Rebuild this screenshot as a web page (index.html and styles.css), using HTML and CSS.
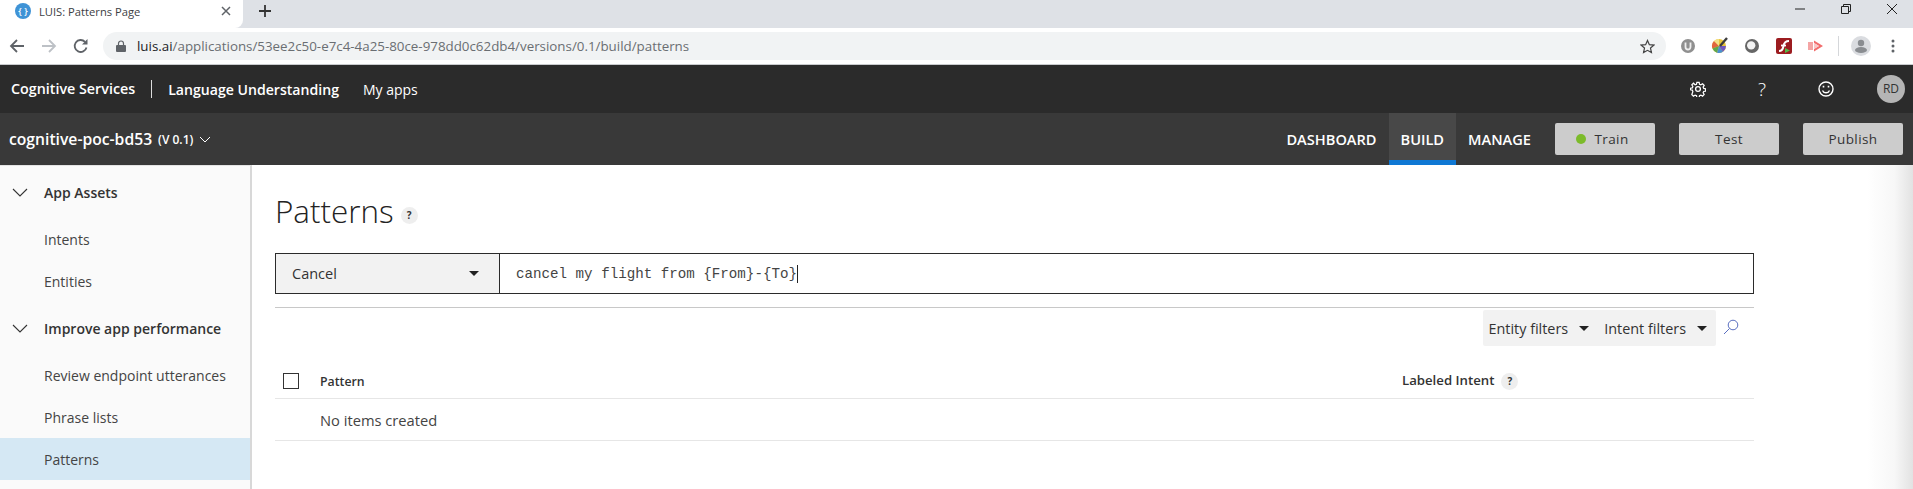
FILE: index.html
```html
<!DOCTYPE html>
<html lang="en">
  <head>
    <meta charset="UTF-8" />
    <title>LUIS: Patterns Page</title>
    <link rel="stylesheet" href="styles.css">
  </head>
  <body>
    <div class="tab-strip">
      <div class="tab">
        <span class="favicon">{ }</span>
        <span class="tab-title">LUIS: Patterns Page</span>
        <svg class="tab-close" width="10" height="10" viewBox="0 0 10 10"><path d="M1 1l8 8M9 1l-8 8" stroke="#5f6368" stroke-width="1.5"/></svg>
      </div>
      <svg class="new-tab" width="14" height="14" viewBox="0 0 14 14"><path d="M7 1v12M1 7h12" stroke="#333" stroke-width="1.8"/></svg>
      <div class="window-controls">
        <svg width="12" height="12" viewBox="0 0 12 12"><path d="M1 6h10" stroke="#222"/></svg>
        <svg width="12" height="12" viewBox="0 0 12 12"><path d="M1.5 3.5h7v7h-7zM3.5 3.5v-2h7v7h-2" fill="none" stroke="#222"/></svg>
        <svg width="12" height="12" viewBox="0 0 12 12"><path d="M1 1l10 10M11 1l-10 10" stroke="#222"/></svg>
      </div>
    </div>

    <div class="toolbar">
      <div class="nav-buttons">
        <svg width="16" height="16" viewBox="0 0 16 16"><path d="M15 8H2M8 2L2 8l6 6" fill="none" stroke="#5f6368" stroke-width="1.8"/></svg>
        <svg width="16" height="16" viewBox="0 0 16 16"><path d="M1 8h13M8 2l6 6-6 6" fill="none" stroke="#bdc1c6" stroke-width="1.8"/></svg>
        <svg width="16" height="16" viewBox="0 0 16 16"><path d="M13.5 9.5A6 6 0 1 1 12 3.800" fill="none" stroke="#5f6368" stroke-width="1.8"/><path d="M14.5 1v5.500H9z" fill="#5f6368"/></svg>
      </div>
      <div class="address-bar">
        <svg class="lock" width="10" height="12" viewBox="0 0 10 12"><path d="M2.5 5V3.500a2.500 2.500 0 0 1 5 0V5" fill="none" stroke="#5f6368" stroke-width="1.2"/><rect y="5" width="10" height="7" rx="1" fill="#5f6368"/></svg>
        <span class="url"><span class="url-host">luis.ai</span>/applications/53ee2c50-e7c4-4a25-80ce-978dd0c62db4/versions/0.1/build/patterns</span>
        <svg class="star" width="15" height="15" viewBox="0 0 16 16"><path d="M8 1.5l2 4.500 4.800.5-3.600 3.200 1 4.800L8 12.100l-4.200 2.400 1-4.800L1.200 6.500 6 6z" fill="none" stroke="#444" stroke-width="1.3"/></svg>
      </div>
      <div class="extensions">
        <svg width="16" height="16" viewBox="0 0 16 16"><circle cx="8" cy="8" r="7" fill="#8f8f8f"/><path d="M5.5 4.500V9a2.500 2.500 0 0 0 5 0V4.500" fill="none" stroke="#eee" stroke-width="1.8"/></svg>
        <svg class="ext-colors" width="18" height="18" viewBox="0 0 18 18"><circle cx="8" cy="10" r="7" fill="#e9c53a"/><path d="M8 10L3 5a7 7 0 0 0-1.500 7.500z" fill="#e0653f"/><path d="M8 10l-6.500 2.500A7 7 0 0 0 6 16.700z" fill="#5da84e"/><path d="M8 10l-2 6.700a7 7 0 0 0 6 -1z" fill="#4a90d0"/><path d="M8 10l4 5.700a7 7 0 0 0 3-5.700z" fill="#6f58c2"/><path d="M8 10L3 5a7 7 0 0 1 5-2z" fill="#f3e08a"/><path d="M9 10l7-8" stroke="#3d3d3d" stroke-width="2.4"/></svg>
        <svg width="16" height="16" viewBox="0 0 16 16"><circle cx="8" cy="8" r="7" fill="#666"/><circle cx="7.200" cy="7.400" r="4.200" fill="#f2f2f2"/></svg>
        <svg width="16" height="16" viewBox="0 0 16 16"><rect width="16" height="16" rx="2" fill="#9c1c20"/><path d="M13 3c-4 0-5 2-5.500 5S6 13 3 13" fill="none" stroke="#fff" stroke-width="2"/><path d="M5 7.5h5" stroke="#fff" stroke-width="1.8"/><path d="M9 10l5 2.500-5 2.500z" fill="#54b948"/></svg>
        <svg width="16" height="16" viewBox="0 0 16 16"><path d="M0 4h5v8H0z" fill="#f4a5a5"/><path d="M6 2.500l9 5.500-9 5.500V11l5-3-5-3z" fill="#f26d6d"/><path d="M6 5l5 3-5 3z" fill="#f9c7c7"/></svg>
      </div>
      <span class="toolbar-sep"></span>
      <svg class="profile" width="20" height="20" viewBox="0 0 20 20"><circle cx="10" cy="10" r="10" fill="#dadce0"/><circle cx="10" cy="7" r="3.200" fill="#8a8d91"/><ellipse cx="10" cy="14" rx="6" ry="3" fill="#8a8d91"/></svg>
      <svg class="menu-dots" width="4" height="14" viewBox="0 0 4 14"><circle cx="2" cy="2" r="1.5" fill="#5f6368"/><circle cx="2" cy="7" r="1.5" fill="#5f6368"/><circle cx="2" cy="12" r="1.5" fill="#5f6368"/></svg>
    </div>

    <div class="top-nav">
      <a class="brand">Cognitive Services</a>
      <a class="product">Language Understanding</a>
      <a class="my-apps">My apps</a>
      <div class="top-icons">
        <svg width="16" height="16" viewBox="0 0 16 16" fill="none" stroke="#fff" stroke-width="1.3"><circle cx="8" cy="8" r="2.400"/><path d="M6.800 1h2.400l.4 2 1.400.6 1.800-1.100 1.700 1.700-1.100 1.800.6 1.400 2 .4v2.400l-2 .4-.6 1.400 1.100 1.800-1.700 1.700-1.800-1.100-1.400.6-.4 2H6.800l-.4-2-1.400-.6-1.800 1.100-1.700-1.700L2.600 10.600 2 9.200 0 8.800V7.200l2-.4.600-1.400-1.100-1.800 1.700-1.700L5 3.600l1.400-.6z" transform="translate(.4 .4) scale(.95)"/></svg>
        <span class="help-glyph">?</span>
        <svg width="16" height="16" viewBox="0 0 16 16" fill="none" stroke="#fff" stroke-width="1.4"><circle cx="8" cy="8" r="7"/><path d="M4.500 9.500a3.800 3.800 0 0 0 7 0"/><path d="M5.500 4.800v1.700M10.500 4.800v1.700" stroke-width="1.6"/></svg>
        <span class="avatar">RD</span>
      </div>
    </div>

    <div class="sub-nav">
      <span class="app-name">cognitive-poc-bd53</span>
      <span class="app-version">(V 0.1)</span>
      <svg class="app-chevron" width="12" height="7" viewBox="0 0 12 7"><path d="M1 1l5 5 5-5" fill="none" stroke="#fff"/></svg>
      <nav class="section-tabs">
        <a>DASHBOARD</a>
        <a class="active">BUILD</a>
        <a>MANAGE</a>
      </nav>
      <div class="actions">
        <button><span class="status-dot"></span>Train</button>
        <button>Test</button>
        <button>Publish</button>
      </div>
    </div>

    <div class="content">
      <aside class="sidebar">
        <div class="side-head"><svg width="16" height="9" viewBox="0 0 16 9"><path d="M1 1l7 7 7-7" fill="none" stroke="#333" stroke-width="1.1"/></svg>App Assets</div>
        <a class="side-link">Intents</a>
        <a class="side-link">Entities</a>
        <div class="side-head"><svg width="16" height="9" viewBox="0 0 16 9"><path d="M1 1l7 7 7-7" fill="none" stroke="#333" stroke-width="1.1"/></svg>Improve app performance</div>
        <a class="side-link">Review endpoint utterances</a>
        <a class="side-link">Phrase lists</a>
        <a class="side-link selected">Patterns</a>
      </aside>

      <main class="main">
        <div class="page-title">
          <h1>Patterns</h1>
          <span class="help-dot">?</span>
        </div>

        <div class="pattern-form">
          <div class="intent-select">
            <span>Cancel</span>
            <span class="caret"></span>
          </div>
          <div class="pattern-input">cancel my flight from {From}-{To}<span class="text-cursor"></span></div>
        </div>

        <div class="filter-row">
          <div class="filters">
            <div class="filter">Entity filters<span class="caret"></span></div>
            <div class="filter">Intent filters<span class="caret"></span></div>
          </div>
          <svg class="search-icon" width="16" height="16" viewBox="0 0 16 16"><circle cx="10" cy="6" r="4.800" fill="none" stroke="#5a6fc0"/><path d="M6.500 9.500L1 15" stroke="#5a6fc0"/></svg>
        </div>

        <div class="table-head">
          <span class="checkbox"></span>
          <span class="col-pattern">Pattern</span>
          <span class="col-intent">Labeled Intent<span class="help-dot small">?</span></span>
        </div>
        <div class="table-empty">No items created</div>
      </main>

      <div class="edge-shade"></div>
    </div>
  </body>
</html>
```

FILE: styles.css
```css
* {
  margin: 0;
  padding: 0;
  box-sizing: border-box;
}
html,
body {
  width: 100%;
  height: 100%;
  overflow: hidden;
  background: #fff;
  font-family: "Open Sans", sans-serif;
  color: #333;
}
svg {
  display: block;
  flex: none;
}

/* browser chrome */
.tab-strip {
  display: flex;
  align-items: center;
  height: 28px;
  background: #dee1e6;
}
.tab {
  display: flex;
  align-items: center;
  width: 243px;
  height: 28px;
  padding: 0 0 6px 15px;
  background: #fff;
  border-radius: 0 0 8px 0;
}
.favicon {
  width: 16px;
  height: 16px;
  border-radius: 50%;
  background: #3f93d6;
  color: #fff;
  font-size: 9px;
  font-weight: 600;
  line-height: 15px;
  text-align: center;
}
.tab-title {
  margin-left: 8px;
  font-size: 11.2px;
  color: #3c4043;
  width: 183px;
  white-space: nowrap;
}
.tab-close {
  margin-left: -1px;
}
.new-tab {
  margin: -6px 0 0 15px;
}
.window-controls {
  display: flex;
  gap: 34px;
  margin-left: auto;
  margin-right: 15px;
  margin-top: -10px;
}
.toolbar {
  display: flex;
  align-items: center;
  height: 37px;
  background: #fff;
  border-bottom: 1px solid #c9cbce;
}
.nav-buttons {
  display: flex;
  gap: 16px;
  margin-left: 9px;
}
.address-bar {
  display: flex;
  align-items: center;
  width: 1563px;
  height: 28px;
  margin-left: 14px;
  background: #f1f3f4;
  border-radius: 14px;
  padding: 0 11px 0 13px;
}
.lock {
  margin-right: 11px;
}
.url {
  font-size: 13.35px;
  color: #6a6e72;
  white-space: nowrap;
}
.url-host {
  color: #202124;
}
.star {
  margin-left: auto;
}
.extensions {
  display: flex;
  align-items: center;
  gap: 16px;
  margin-left: 14px;
}
.ext-colors {
  margin: -2px -1px 0;
}
.toolbar-sep {
  width: 1px;
  height: 20px;
  background: #d5d7da;
  margin-left: 14px;
}
.profile {
  margin-left: 12px;
}
.menu-dots {
  margin-left: 20px;
}

/* app header */
.top-nav {
  display: flex;
  align-items: center;
  height: 48px;
  background: #2b2b2b;
  color: #fff;
  font-size: 14px;
}
.brand {
  margin-left: 11px;
  font-size: 14.3px;
  font-weight: 600;
  padding-right: 16px;
  border-right: 1px solid #ddd;
  line-height: 18px;
}
.product {
  margin-left: 16px;
  font-size: 14.1px;
  font-weight: 600;
}
.my-apps {
  margin-left: 24px;
  font-size: 14px;
}
.top-icons {
  display: flex;
  align-items: center;
  margin-left: auto;
  margin-right: 8px;
  gap: 51px;
}
.help-glyph {
  font-size: 19px;
  font-weight: 300;
  width: 10px;
  text-align: center;
}
.avatar {
  width: 28px;
  height: 28px;
  margin-left: -8px;
  border-radius: 50%;
  background: #b5b5b5;
  color: #333;
  font-size: 12px;
  line-height: 28px;
  text-align: center;
}
.sub-nav {
  display: flex;
  align-items: center;
  height: 52px;
  background: #393939;
  color: #fff;
}
.app-name {
  margin-left: 9px;
  font-size: 15.7px;
  font-weight: 600;
}
.app-version {
  margin-left: 6px;
  font-size: 12px;
  font-weight: 600;
}
.app-chevron {
  margin-left: 6px;
}
.section-tabs {
  display: flex;
  align-items: stretch;
  align-self: stretch;
  margin-left: auto;
  font-size: 14.6px;
  font-weight: 600;
}
.section-tabs a {
  display: flex;
  align-items: center;
  padding: 0 12px 1px;
}
.section-tabs .active {
  background: #484848;
  border-bottom: 5px solid #0f78d4;
  padding: 5px 12px 0;
}
.actions {
  display: flex;
  gap: 24px;
  margin-left: 12px;
  margin-right: 10px;
}
.actions button {
  display: flex;
  align-items: center;
  justify-content: center;
  width: 100px;
  height: 32px;
  background: #cccccc;
  border: none;
  border-radius: 2px;
  font-family: inherit;
  font-size: 13.5px;
  letter-spacing: 0.4px;
  color: #333;
}
.status-dot {
  width: 10px;
  height: 10px;
  border-radius: 50%;
  background: #7cbb2a;
  margin: 0 8px 0 -5px;
}

/* page */
.content {
  display: flex;
  height: 324px;
}
.sidebar {
  width: 252px;
  flex: none;
  background: #fafafa;
  border-right: 2px solid #d8d8d8;
  border-top: 1px solid #e4e4e4;
}
.side-head,
.side-link {
  display: flex;
  align-items: center;
  font-size: 14px;
  white-space: nowrap;
}
.side-head {
  font-weight: 600;
  height: 52px;
  padding-left: 12px;
}
.side-head svg {
  margin-right: 16px;
}
.side-link {
  height: 42px;
  padding-left: 44px;
  color: #444;
}
.side-link.selected {
  background: #d5e8f4;
}
.main {
  flex: 1;
  padding: 0 113px 0 23px;
  min-width: 0;
}
.page-title {
  display: flex;
  align-items: center;
  height: 88px;
  padding-top: 2px;
}
.page-title h1 {
  font-size: 31.4px;
  font-weight: 300;
  color: #222;
}
.help-dot {
  width: 17px;
  height: 17px;
  margin: 10px 0 0 7px;
  border-radius: 50%;
  background: #eee;
  font-size: 10px;
  font-weight: 700;
  line-height: 17px;
  text-align: center;
}
.help-dot.small {
  display: inline-block;
  margin: 2px 0 0 7px;
}
.pattern-form {
  display: flex;
  height: 41px;
  border: 1px solid #2b2b2b;
}
.intent-select {
  display: flex;
  align-items: center;
  justify-content: space-between;
  width: 224px;
  padding: 0 20px 0 16px;
  background: #f2f2f2;
  border-right: 1px solid #2b2b2b;
  font-size: 14.5px;
}
.caret {
  width: 0;
  height: 0;
  border-left: 5px solid transparent;
  border-right: 5px solid transparent;
  border-top: 5px solid #222;
}
.pattern-input {
  display: flex;
  align-items: center;
  flex: 1;
  padding-left: 16px;
  font-family: "Liberation Mono", monospace;
  font-size: 14.2px;
  color: #444;
  white-space: pre;
}
.text-cursor {
  width: 1px;
  height: 18px;
  background: #222;
}
.filter-row {
  display: flex;
  align-items: center;
  justify-content: flex-end;
  height: 40px;
  margin-top: 13px;
  border-top: 1px solid #c8c8c8;
  padding: 2px 15px 1px 0;
}
.filters {
  display: flex;
  align-items: center;
  height: 36px;
  background: #f2f2f2;
  border-radius: 2px;
  font-size: 14.4px;
  padding: 0 9px 0 5px;
  gap: 15px;
}
.filter {
  display: flex;
  align-items: center;
  gap: 11px;
}
.search-icon {
  margin-left: 7px;
  margin-top: -2px;
}
.table-head {
  display: flex;
  align-items: center;
  height: 52px;
  border-bottom: 1px solid #e6e6e6;
  font-size: 12.3px;
  font-weight: 600;
  padding: 17px 0 0 8px;
}
.checkbox {
  width: 16px;
  height: 16px;
  background: #fff;
  border: 1px solid #333;
}
.col-pattern {
  margin-left: 21px;
  width: 1082px;
}
.col-intent {
  display: flex;
  align-items: center;
  margin-top: -2px;
  font-size: 13.2px;
}
.table-empty {
  display: flex;
  align-items: center;
  height: 42px;
  padding: 1px 0 0 45px;
  border-bottom: 1px solid #e6e6e6;
  font-size: 14.7px;
  color: #444;
}
.edge-shade {
  width: 46px;
  flex: none;
  background: linear-gradient(to right, #fff, #f7f7f7 60%, #e2e2e2);
}
```
